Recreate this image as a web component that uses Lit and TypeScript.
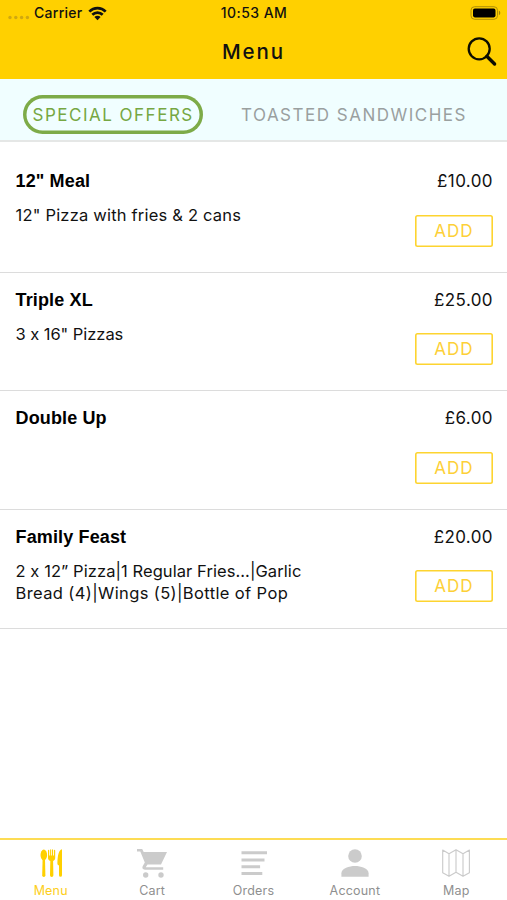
import { LitElement, html, css, svg } from "lit";
import { customElement, property } from "lit/decorators.js";
import { styleMap } from "lit/directives/style-map.js";

interface Line {
  text: string;
  tracking: number;
}

interface Offer {
  name: string;
  lines: Line[];
  price: string;
}

const OFFERS: Offer[] = [
  { name: '12" Meal', lines: [{ text: '12" Pizza with fries & 2 cans', tracking: 0.2 }], price: "£10.00" },
  { name: "Triple XL", lines: [{ text: '3 x 16" Pizzas', tracking: -0.05 }], price: "£25.00" },
  { name: "Double Up", lines: [], price: "£6.00" },
  {
    name: "Family Feast",
    lines: [
      { text: "2 x 12” Pizza|1 Regular Fries...|Garlic", tracking: 0.07 },
      { text: "Bread (4)|Wings (5)|Bottle of Pop", tracking: 0.38 },
    ],
    price: "£20.00",
  },
];

const ICONS = {
  Menu: svg`
    <ellipse cx="7.800" cy="7" rx="3.300" ry="5.400"/>
    <path d="M6.600 11H9l.4 16.300a1.500 1.500 0 0 1-3.200 0z"/>
    <path d="M12 2.500c0-1 1.200-1 1.200 0v5h.9V2c0-1 1.100-1 1.100 0v5.500h.8V2c0-1 1.100-1 1.100 0v5.500h.9v-5c0-1 1.200-1 1.200 0v7.300c0 1.700-.8 2.600-2.100 3.200l.3 14.300a1.600 1.600 0 0 1-3.400 0L14.300 13c-1.500-.6-2.300-1.500-2.300-3.200z"/>
    <path d="M26 1.300v26a1.500 1.500 0 0 1-3 0V17.500c-1.500-.5-1.700-1.400-1.600-3C21.700 8 22.500 2 26 1.300z"/>`,
  Cart: svg`
    <path d="M0 1h5.200l1.500 3H30l-6 12.500H10.500L8.700 19.300h17.500v2.500H8c-2.500 0-3.200-2-2.200-3.700l2-3.500L3.300 3.500H0z"/>
    <circle cx="8.700" cy="27" r="2.700"/><circle cx="24" cy="27" r="2.700"/>`,
  Orders: svg`<path d="M2.500 3.300H28v3H2.500zM2.500 10.400h23v3h-23zM2.500 17.200h18.600v3H2.500zM2.500 24H23.300v3H2.500z"/>`,
  Account: svg`
    <circle cx="15" cy="8" r="6.800"/>
    <path d="M1.400 28.700v-3.500C1.400 20.500 9.500 18 15 18s13.600 2.500 13.600 7.200v3.500z"/>`,
  Map: svg`<path fill="none" stroke="currentColor" stroke-width="1.150" stroke-linejoin="round"
    d="M1.700 2 8 5.700l7-4 7 4L28.400 2v22.800L22 28.300l-7-4-7 4-6.300-3.500zM8 5.700v22.600M15 1.700v22.600M22 5.700v22.600"/>`,
};

type TabName = keyof typeof ICONS;

@customElement("offer-row")
class OfferRow extends LitElement {
  @property({ attribute: false }) offer!: Offer;

  static styles = css`
    :host {
      display: flex;
      justify-content: space-between;
      box-sizing: border-box;
      height: 118.600px;
      padding: 16px 14px 0 15.500px;
      border-bottom: 1px solid #dcdcdc;
      color: #111;
    }
    .name {
      font: bold 18px/22px "Liberation Sans", Arial, sans-serif;
      color: #000;
      letter-spacing: 0.140px;
    }
    .text {
      margin-top: 12px;
      font: 400 16.500px/22px Inter, sans-serif;
      font-feature-settings: "calt" 0;
      white-space: nowrap;
    }
    .side {
      display: flex;
      flex-direction: column;
      align-items: flex-end;
      gap: 22.300px;
    }
    .price {
      font: 400 17px/22px Inter, sans-serif;
      letter-spacing: 0.400px;
    }
    .add {
      width: 78px;
      height: 32px;
      padding: 0;
      border: 0;
      box-shadow: inset 0 0 0 1.600px #fdd430;
      border-radius: 2.500px;
      background: #fff;
      color: #fdd038;
      font: 400 17px/32px Inter, sans-serif;
      letter-spacing: 1px;
    }
  `;

  render() {
    return html`
      <div>
        <div class="name">${this.offer.name}</div>
        <div class="text">
          ${this.offer.lines.map(
            (l) => html`<div style=${styleMap({ letterSpacing: `${l.tracking}px` })}>${l.text}</div>`
          )}
        </div>
      </div>
      <div class="side">
        <div class="price">${this.offer.price}</div>
        <button class="add">ADD</button>
      </div>
    `;
  }
}

@customElement("tab-item")
class TabItem extends LitElement {
  @property() name: TabName = "Menu";

  static styles = css`
    :host {
      display: flex;
      flex-direction: column;
      align-items: center;
      flex: 1;
      padding-top: 8px;
      color: #cbcbcb;
    }
    :host([active]) {
      color: #ffd000;
    }
    .icon {
      width: 30px;
      height: 30px;
    }
    .label {
      margin-top: 5px;
      font: 400 12.500px/16px Inter, sans-serif;
      letter-spacing: 0.200px;
      color: #8f8f8f;
    }
    :host([active]) .label {
      color: #fdce20;
    }
  `;

  render() {
    return html`
      <svg class="icon" viewBox="0 0 30 30" fill="currentColor">${ICONS[this.name]}</svg>
      <div class="label">${this.name}</div>
    `;
  }
}

@customElement("app-root")
class AppRoot extends LitElement {
  static styles = css`
    :host {
      display: flex;
      flex-direction: column;
      height: 900px;
      overflow: hidden;
      background: #fff;
      font-family: Inter, sans-serif;
    }
    .header {
      height: 79px;
      flex: none;
      background: #ffd000;
      color: #111;
    }
    .status,
    .bar {
      display: grid;
      grid-template-columns: 1fr auto 1fr;
      align-items: center;
    }
    .status {
      height: 26px;
      padding: 0 7px 0 8px;
      font: 500 14px/26px Inter, sans-serif;
    }
    .carrier {
      display: flex;
      align-items: center;
      letter-spacing: 0.280px;
    }
    .time {
      letter-spacing: 0.450px;
    }
    .dots {
      width: 22px;
      height: 5px;
      margin: 9px 4px 0 0;
    }
    .wifi {
      width: 19px;
      height: 15px;
      margin-left: 5.500px;
    }
    .battery {
      width: 31px;
      height: 14px;
      margin-right: -1px;
      justify-self: end;
    }
    .bar {
      height: 51px;
      padding: 0 9.500px;
    }
    .title {
      grid-column: 2;
      font-size: 20.500px;
      font-weight: 500;
      letter-spacing: 1.900px;
    }
    .search {
      width: 32px;
      height: 32px;
      justify-self: end;
      margin-top: 1px;
    }
    .cats {
      display: flex;
      align-items: center;
      box-sizing: border-box;
      flex: none;
      height: 63px;
      padding: 9px 0 0 23px;
      border-bottom: 2px solid #e5e7e6;
      background: #f0feff;
      font-size: 17px;
      letter-spacing: 1.500px;
      white-space: nowrap;
    }
    .cat {
      box-sizing: border-box;
      height: 39px;
      line-height: 40px;
      color: #9aa09f;
    }
    .cat.on {
      width: 180px;
      margin-right: 38px;
      padding-left: 9.500px;
      box-shadow: inset 0 0 0 3.500px #7dab48;
      border-radius: 20px;
      color: #76a743;
    }
    .list {
      flex: 1;
      padding-top: 12.300px;
    }
    .tabs {
      display: flex;
      box-sizing: border-box;
      flex: none;
      height: 62px;
      border-top: 2px solid #fddc54;
    }
  `;

  render() {
    return html`
      <div class="header">
        <div class="status">
          <div class="carrier">
            <svg class="dots" viewBox="0 0 22 5" fill="#d0a810">
              <circle cx="2" cy="2.500" r="1.700"/><circle cx="7.800" cy="2.500" r="1.700"/>
              <circle cx="13.600" cy="2.500" r="1.700"/><circle cx="19.400" cy="2.500" r="1.700"/>
            </svg>
            <span>Carrier</span>
            <svg class="wifi" viewBox="0 0 19 15" fill="none" stroke="#111" stroke-width="2.700">
              <path d="M1.300 5.600a11.600 11.600 0 0 1 16.400 0M4.300 8.700a7.400 7.400 0 0 1 10.400 0"/>
              <path d="M9.500 14.200 6.400 11.100a4.400 4.400 0 0 1 6.200 0z" fill="#111" stroke="none"/>
            </svg>
          </div>
          <div class="time">10:53 AM</div>
          <svg class="battery" viewBox="0 0 31 14">
            <rect x="1" y=".7" width="26.500" height="12.600" rx="3.600" fill="none" stroke="#b09005"/>
            <rect x="3" y="2.600" width="22.500" height="8.800" rx="1.800" fill="#000"/>
            <path d="M28.900 4.800c1.800.6 1.800 3.800 0 4.400z" fill="#a08408"/>
          </svg>
        </div>
        <div class="bar">
          <div class="title">Menu</div>
          <svg class="search" viewBox="0 0 32 32" fill="none" stroke="#0d0d00">
            <circle cx="13.200" cy="12.800" r="10.500" stroke-width="2.300"/>
            <path d="M20.800 20.300 28.600 28" stroke-width="3.400" stroke-linecap="round"/>
          </svg>
        </div>
      </div>
      <div class="cats">
        <div class="cat on">SPECIAL OFFERS</div>
        <div class="cat">TOASTED SANDWICHES</div>
      </div>
      <div class="list">${OFFERS.map((o) => html`<offer-row .offer=${o}></offer-row>`)}</div>
      <div class="tabs">
        ${(Object.keys(ICONS) as TabName[]).map(
          (n) => html`<tab-item name=${n} ?active=${n === "Menu"}></tab-item>`
        )}
      </div>
    `;
  }
}
